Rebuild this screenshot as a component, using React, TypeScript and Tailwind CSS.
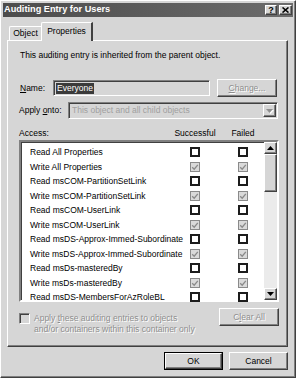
import React from 'react';

const raised =
  'border border-t-white border-l-white border-r-[#404040] border-b-[#404040] shadow-[inset_-1px_-1px_0_#808080]';
const sunken =
  'border border-t-[#808080] border-l-[#808080] border-r-white border-b-white shadow-[inset_1px_1px_0_#404040]';
const dimText = 'text-[#8e8e8e] [text-shadow:1px_1px_0_#fff]';

const rows = [
  { label: 'Read All Properties', checked: false },
  { label: 'Write All Properties', checked: true },
  { label: 'Read msCOM-PartitionSetLink', checked: false },
  { label: 'Write msCOM-PartitionSetLink', checked: true },
  { label: 'Read msCOM-UserLink', checked: false },
  { label: 'Write msCOM-UserLink', checked: true },
  { label: 'Read msDS-Approx-Immed-Subordinate', checked: false },
  { label: 'Write msDS-Approx-Immed-Subordinate', checked: true },
  { label: 'Read msDs-masteredBy', checked: false },
  { label: 'Write msDs-masteredBy', checked: true },
  { label: 'Read msDS-MembersForAzRoleBL', checked: false },
];

function Arrow({ dir, dim }: { dir: 'up' | 'down'; dim?: boolean }) {
  const pts = dir === 'up' ? '3.5,0 7,4 0,4' : '0,0 7,0 3.5,4';
  return (
    <svg width="7" height="4" viewBox="0 0 7 4" className="overflow-visible">
      {dim && <polygon points={pts} fill="#fff" transform="translate(1 1)" />}
      <polygon points={pts} fill={dim ? '#8e8e8e' : '#000'} />
    </svg>
  );
}

function Check({ checked }: { checked: boolean }) {
  if (checked) {
    return (
      <div className="w-[10px] h-[10px] border border-[#8a8a8a] bg-[#dadada] flex items-center justify-center">
        <svg width="8" height="8" viewBox="0 0 8 8">
          <path d="M1.2 4.2 L3.2 6.2 L6.8 1.8" stroke="#8a8a8a" strokeWidth="1.3" fill="none" />
        </svg>
      </div>
    );
  }
  return <div className="w-[10px] h-[10px] border-2 border-[#1c1c1c] bg-white" />;
}

export default function App() {
  return (
    <div
      className={`w-[296px] h-[378px] bg-[#d6d6d6] p-[2px] flex flex-col text-[8.5px] text-black ${raised}`}
      style={{ fontFamily: '"Liberation Sans", Arial, sans-serif' }}
    >
      {/* title bar */}
      <div className="h-[14px] flex items-center bg-gradient-to-r from-[#4c4c4c] to-[#6c6c6c] pl-[1px] pr-[1px]">
        <span className="flex-1 text-white font-bold text-[9.2px] leading-none">Auditing Entry for Users</span>
        <div className={`w-[12px] h-[10px] bg-[#d6d6d6] flex items-center justify-center ${raised}`}>
          <span className="font-bold text-[9px] leading-none">?</span>
        </div>
        <div className={`w-[13px] h-[10px] ml-[2px] bg-[#d6d6d6] flex items-center justify-center ${raised}`}>
          <svg width="7" height="6" viewBox="0 0 7 6">
            <path d="M0.5 0.5 L6.5 5.5 M6.5 0.5 L0.5 5.5" stroke="#000" strokeWidth="1.6" />
          </svg>
        </div>
      </div>

      {/* tabs */}
      <div className="mt-[5px] ml-[4px] mr-[5px] h-[18px] flex items-end pl-[2px]">
        <div className="w-[33px] h-[14px] border-t border-l border-white border-r border-r-[#404040] rounded-tl-[2px] flex items-center justify-center leading-none">
          Object
        </div>
        <div className="relative z-10 -ml-[1px] -mb-[1px] w-[52px] h-[19px] bg-[#d6d6d6] border-t border-l border-white border-r-2 border-r-[#404040] rounded-tl-[2px] flex items-start justify-center pt-[4px] leading-none">
          Properties
        </div>
      </div>

      {/* panel */}
      <div className={`ml-[4px] mr-[5px] h-[307px] flex flex-col pl-[11px] pr-[8px] ${raised}`}>
        <div className="mt-[8px] leading-[12px] pl-[1px]">This auditing entry is inherited from the parent object.</div>

        <div className="mt-[18px] h-[18px] flex items-center">
          <span className="w-[34px] pl-[1px]">
            <u>N</u>ame:
          </span>
          <div className={`w-[157px] h-[16px] flex items-center pl-[2px] ${sunken}`}>
            <span className="bg-[#3a3a3a] text-white leading-[11px] px-[1px]">Everyone</span>
          </div>
          <div className={`ml-[7px] w-[60px] h-[18px] flex items-center justify-center ${raised} ${dimText}`}>
            <span>
              <u>C</u>hange...
            </span>
          </div>
        </div>

        <div className="mt-[5px] h-[17px] flex items-center">
          <span className="w-[49px]">
            Apply <u>o</u>nto:
          </span>
          <div className={`w-[210px] h-[17px] flex items-center pl-[3px] pr-[1px] ${sunken}`}>
            <span className="flex-1 text-[#a0a0a0]">This object and all child objects</span>
            <div className={`w-[13px] h-[13px] flex items-center justify-center ${raised}`}>
              <Arrow dir="down" dim />
            </div>
          </div>
        </div>

        <div className="mt-[8px] leading-[12px] flex">
          <span className="w-[151px]">Access:</span>
          <span className="w-[50px] text-center">Successful</span>
          <span className="w-[8px]" />
          <span className="w-[30px] text-center">Failed</span>
        </div>

        <div className={`mt-[1px] w-[260px] h-[162px] bg-white flex ${sunken} border-[2px]`}>
          <div className="flex-1 pt-[3px] pl-[9px]">
            {rows.map((r) => (
              <div key={r.label} className="h-[14.5px] flex items-center">
                <span className="w-[155px] whitespace-nowrap leading-none">{r.label}</span>
                <div className="w-[20px] flex justify-center">
                  <Check checked={r.checked} />
                </div>
                <div className="w-[28px]" />
                <div className="w-[20px] flex justify-center">
                  <Check checked={r.checked} />
                </div>
              </div>
            ))}
          </div>
          <div className="w-[13px] flex flex-col">
            <div className={`h-[12px] bg-[#d6d6d6] flex items-center justify-center ${raised}`}>
              <Arrow dir="up" />
            </div>
            <div className={`h-[38px] bg-[#d6d6d6] ${raised}`} />
            <div className="flex-1 bg-[#ebebeb]" />
            <div className={`h-[12px] bg-[#d6d6d6] flex items-center justify-center ${raised}`}>
              <Arrow dir="down" />
            </div>
          </div>
        </div>

        <div className="mt-[6px] flex">
          <div className="flex-1 flex pt-[5px]">
            <div className={`w-[11px] h-[11px] mt-[0px] bg-[#d6d6d6] ${sunken}`} />
            <div className={`ml-[4px] leading-[10.5px] ${dimText}`}>
              Apply <u>t</u>hese auditing entries to objects
              <br />
              and/or containers within this container only
            </div>
          </div>
          <div className={`w-[60px] h-[18px] flex items-center justify-center ${raised} ${dimText}`}>
            <span>
              C<u>l</u>ear All
            </span>
          </div>
        </div>
      </div>

      {/* dialog buttons */}
      <div className="mt-[5px] mr-[5px] flex justify-end gap-[6px]">
        <div className="w-[59px] h-[18px] border border-black">
          <div className={`w-full h-full flex items-center justify-center ${raised}`}>OK</div>
        </div>
        <div className={`w-[59px] h-[18px] flex items-center justify-center ${raised}`}>Cancel</div>
      </div>
    </div>
  );
}
